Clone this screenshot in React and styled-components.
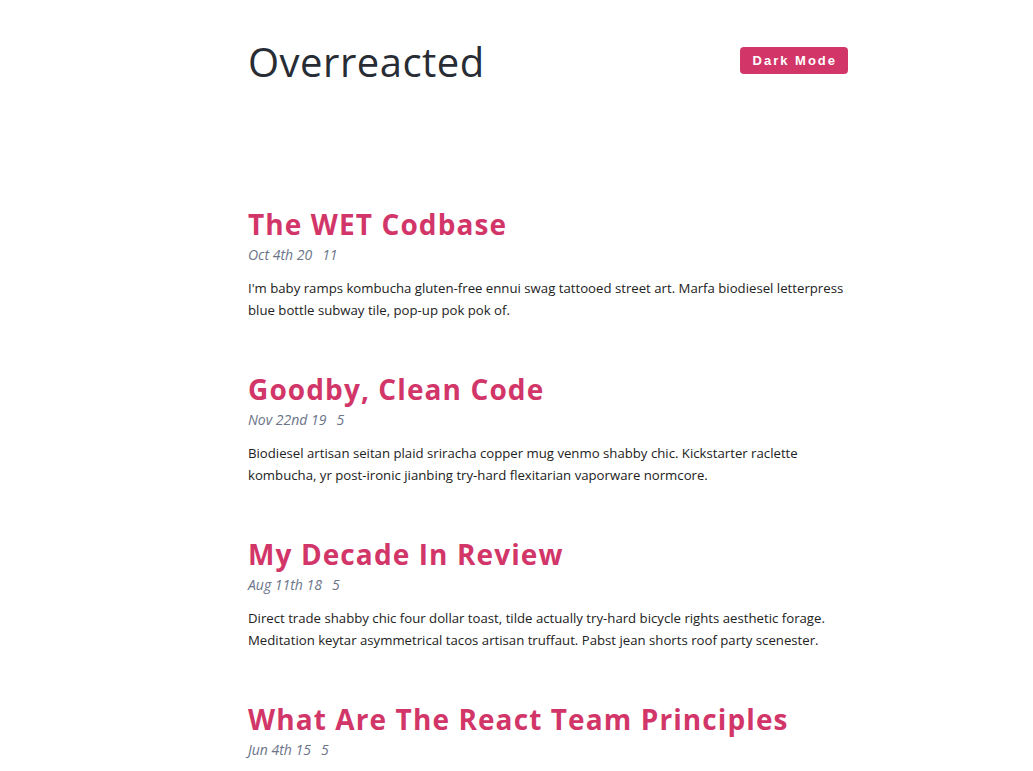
import React from "react";
import styled, { createGlobalStyle } from "styled-components";

const Global = createGlobalStyle`
  html, body { margin: 0; padding: 0; background: #ffffff; }
  body { font-family: "Open Sans", "Noto Sans", sans-serif; color: #222222; }
`;

const Page = styled.div`
  width: 600px;
  margin-left: 248px;
  padding-top: 38px;
`;

const Header = styled.header`
  display: flex;
  justify-content: space-between;
  align-items: flex-start;
  margin-bottom: 118px;
`;

const SiteTitle = styled.h1`
  margin: 0;
  font-size: 40px;
  font-weight: 400;
  line-height: 48px;
  color: #282c35;
  letter-spacing: 0.5px;
`;

const ModeButton = styled.button`
  margin-top: 9px;
  height: 27px;
  padding: 0 11px 0 13px;
  border: none;
  border-radius: 4px;
  background: #d23669;
  color: #ffffff;
  font-family: "Liberation Sans", Arial, sans-serif;
  font-weight: 700;
  font-size: 13px;
  letter-spacing: 2px;
  cursor: pointer;
`;

const Post = styled.article`
  display: flex;
  flex-direction: column;
  margin-bottom: 48px;
`;

const PostTitle = styled.h3`
  margin: 0;
  font-size: 28px;
  line-height: 40px;
  font-weight: 700;
  color: #d23669;
  letter-spacing: 1.1px;
`;

const Meta = styled.small`
  display: flex;
  gap: 10px;
  font-size: 14px;
  line-height: 22px;
  font-style: italic;
  color: #6b7489;
`;

const Excerpt = styled.p`
  margin: 11px 0 0;
  font-size: 13.2px;
  line-height: 22px;
  color: #222222;
`;

const posts = [
  {
    title: "The WET Codbase",
    date: "Oct 4th 20",
    count: "11",
    text: "I'm baby ramps kombucha gluten-free ennui swag tattooed street art. Marfa biodiesel letterpress blue bottle subway tile, pop-up pok pok of.",
  },
  {
    title: "Goodby, Clean Code",
    date: "Nov 22nd 19",
    count: "5",
    text: "Biodiesel artisan seitan plaid sriracha copper mug venmo shabby chic. Kickstarter raclette kombucha, yr post-ironic jianbing try-hard flexitarian vaporware normcore.",
  },
  {
    title: "My Decade In Review",
    date: "Aug 11th 18",
    count: "5",
    text: "Direct trade shabby chic four dollar toast, tilde actually try-hard bicycle rights aesthetic forage. Meditation keytar asymmetrical tacos artisan truffaut. Pabst jean shorts roof party scenester.",
  },
  {
    title: "What Are The React Team Principles",
    date: "Jun 4th 15",
    count: "5",
    text: "Hella narwhal cosby sweater, selfies pinterest church-key ethical tumblr kale chips mlkshk. Single-origin coffee slow-carb kinfolk, vinyl lo-fi wayfarers.",
  },
];

export default function App() {
  return (
    <>
      <Global />
      <Page>
        <Header>
          <SiteTitle>Overreacted</SiteTitle>
          <ModeButton>Dark Mode</ModeButton>
        </Header>
        <main>
          {posts.map((p) => (
            <Post key={p.title}>
              <PostTitle>{p.title}</PostTitle>
              <Meta>
                <span>{p.date}</span>
                <span>{p.count}</span>
              </Meta>
              <Excerpt>{p.text}</Excerpt>
            </Post>
          ))}
        </main>
      </Page>
    </>
  );
}
